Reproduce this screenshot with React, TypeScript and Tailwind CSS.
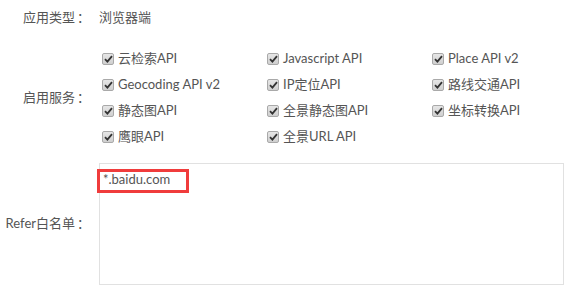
import React from 'react';

const services = [
  '云检索API', 'Javascript API', 'Place API v2',
  'Geocoding API v2', 'IP定位API', '路线交通API',
  '静态图API', '全景静态图API', '坐标转换API',
  '鹰眼API', '全景URL API',
];

const Check: React.FC<{ label: string }> = ({ label }) => (
  <div className="flex items-center h-[26px]">
    <span className="ml-[4px] w-[12px] h-[12px] rounded-[2px] border border-[#a9a9a9] bg-gradient-to-b from-[#e6e6e6] to-[#cfcfcf] flex items-center justify-center shrink-0">
      <svg width="9" height="8" viewBox="0 0 9 8">
        <path d="M1 4.2 L3.4 6.6 L8 1.2" fill="none" stroke="#333" strokeWidth="1.8" />
      </svg>
    </span>
    <span className="ml-[4px] whitespace-nowrap">{label}</span>
  </div>
);

const Label: React.FC<{ text: string }> = ({ text }) => (
  <div className="w-[88px] shrink-0 flex justify-end">
    <span>{text}</span>
    <span className="w-[13px] pl-[2px] text-left whitespace-nowrap">：</span>
  </div>
);

export default function App() {
  return (
    <div
      className="w-[568px] h-[289px] bg-white text-[13px] text-[#555] pt-[5px] overflow-hidden"
      style={{ fontFamily: 'Lato, "Noto Sans CJK SC", sans-serif' }}
    >
      {/* 应用类型 */}
      <div className="flex items-center h-[26px]">
        <Label text="应用类型" />
        <div className="ml-[11px]">浏览器端</div>
      </div>

      {/* 启用服务 */}
      <div className="flex items-center mt-[15px]">
        <Label text="启用服务" />
        <div className="ml-[10px] grid grid-cols-[165px_165px_165px]">
          {services.map(s => <Check key={s} label={s} />)}
        </div>
      </div>

      {/* Refer白名单 */}
      <div className="flex items-center mt-[13px]">
        <Label text="Refer白名单" />
        <div className="ml-[11px] relative w-[465px] h-[122px] border border-[#e1e1e1] px-[3px] pt-[7px] leading-[17px]">
          *.baidu.com
          <div className="absolute left-[-3px] top-[5px] w-[92px] h-[24px] border-[3px] border-[#f03c3c]" />
        </div>
      </div>
    </div>
  );
}
